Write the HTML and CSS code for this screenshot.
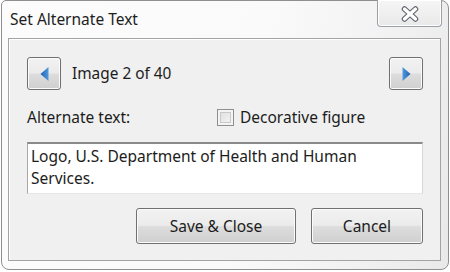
FILE: index.html
```html
<!DOCTYPE html>
<html lang="en">
<head>
<meta charset="utf-8">
<title>Set Alternate Text</title>
<link rel="stylesheet" href="styles.css">
</head>
<body>
<div class="window">
  <div class="titlebar">
    <span class="title">Set Alternate Text</span>
    <button class="close" aria-label="Close">
      <svg width="20" height="18" viewBox="0 0 20 18">
        <g stroke-linecap="round">
          <line x1="4.5" y1="4" x2="15.5" y2="14" stroke="#5f646e" stroke-width="5.5"/>
          <line x1="15.5" y1="4" x2="4.5" y2="14" stroke="#5f646e" stroke-width="5.5"/>
          <line x1="4.5" y1="4" x2="15.5" y2="14" stroke="#ffffff" stroke-width="3.3"/>
          <line x1="15.5" y1="4" x2="4.5" y2="14" stroke="#ffffff" stroke-width="3.3"/>
        </g>
      </svg>
    </button>
  </div>
  <div class="panel">
    <div class="nav-row">
      <button class="btn nav-btn" aria-label="Previous">
        <svg width="9" height="14" viewBox="0 0 9 14">
          <defs>
            <linearGradient id="gl" x1="0" y1="0" x2="1" y2="0">
              <stop offset="0" stop-color="#1d5fae"/>
              <stop offset="1" stop-color="#4f9ae0"/>
            </linearGradient>
          </defs>
          <polygon points="8.5,0 0.5,7 8.5,14" fill="url(#gl)"/>
        </svg>
      </button>
      <span class="counter">Image 2 of 40</span>
      <button class="btn nav-btn" aria-label="Next">
        <svg width="9" height="14" viewBox="0 0 9 14">
          <defs>
            <linearGradient id="gr" x1="0" y1="0" x2="1" y2="0">
              <stop offset="0" stop-color="#4f9ae0"/>
              <stop offset="1" stop-color="#1d5fae"/>
            </linearGradient>
          </defs>
          <polygon points="0.5,0 8.5,7 0.5,14" fill="url(#gr)"/>
        </svg>
      </button>
    </div>
    <div class="label-row">
      <span class="label">Alternate text:</span>
      <label class="check"><span class="box"></span>Decorative figure</label>
    </div>
    <div class="textbox">Logo, U.S. Department of Health and Human Services.</div>
    <div class="actions">
      <button class="btn action save">Save &amp; Close</button>
      <button class="btn action cancel">Cancel</button>
    </div>
  </div>
</div>
</body>
</html>
```
FILE: styles.css
```css
* { box-sizing: border-box; }
html, body { margin: 0; padding: 0; background: #ffffff; }
body {
  font-family: "Noto Sans", "Open Sans", sans-serif;
  color: #1c1c1c;
  width: 450px;
  height: 272px;
  overflow: hidden;
}
.window {
  margin-left: 1px;
  width: 448px;
  height: 270px;
  border: 1px solid #8f8f8f;
  border-radius: 5px 8px 8px 8px;
  background: linear-gradient(100deg, #fcfcfc 0%, #fafafa 55%, #f2f2f2 80%, #e9e9e9 100%);
  display: flex;
  flex-direction: column;
}
.titlebar {
  height: 37px;
  display: flex;
  align-items: flex-start;
  justify-content: space-between;
}
.title {
  font-size: 15.5px;
  padding: 8px 0 0 8px;
  line-height: 20px;
  color: #1e1e1e;
}
.close {
  margin: -1px 6px 0 0;
  width: 65px;
  height: 27px;
  border: 1px solid #9aa0a8;
  border-top: none;
  border-radius: 0 0 4px 4px;
  background: linear-gradient(#f6f6f6, #e9e9e9);
  box-shadow: inset 0 0 0 1px #ffffff;
  display: flex;
  align-items: center;
  justify-content: center;
  padding: 0;
}
.close svg { display: block; margin-top: 1px; }
.panel {
  margin: 0 7px 8px 6px;
  flex: 1;
  background: #f0f0f0;
  border: 1px solid #a3a3a3;
  box-shadow: inset 1px 1px 0 #ffffff;
  padding: 18px 17px 0 18px;
  display: flex;
  flex-direction: column;
}
.btn {
  font-family: inherit;
  color: #1c1c1c;
  border: 1px solid #707070;
  border-radius: 3px;
  background: linear-gradient(#f2f2f2 0%, #ebebeb 48%, #dddddd 52%, #cfcfcf 100%);
  box-shadow: inset 0 0 0 1px #fbfbfb;
  padding: 0;
  display: flex;
  align-items: center;
  justify-content: center;
}
.nav-row {
  display: flex;
  align-items: center;
  height: 33px;
}
.nav-btn {
  width: 34px;
  height: 33px;
}
.counter {
  flex: 1;
  margin-left: 11px;
  font-size: 15.4px;
}
.label-row {
  display: flex;
  align-items: center;
  margin-top: 18px;
  height: 18px;
  font-size: 15.5px;
}
.label { width: 190px; }
.check {
  display: flex;
  align-items: center;
}
.box {
  width: 17px;
  height: 17px;
  border: 1px solid #8e8f8f;
  background: linear-gradient(135deg, #dcdcdc, #f7f7f7);
  box-shadow: inset 0 0 0 2px #f4f4f4, inset 0 0 0 3px #c9c9c9;
  margin-right: 6px;
}
.textbox {
  margin-top: 16px;
  width: 396px;
  height: 52px;
  background: #ffffff;
  border: 1px solid #dadada;
  border-top: 2px solid #8a8a8a;
  border-left-color: #a8a8a8;
  border-right-color: #d8d8d8;
  border-bottom-color: #e6e6e6;
  padding: 1px 3px;
  font-size: 15.5px;
  line-height: 22px;
}
.actions {
  display: flex;
  justify-content: flex-end;
  gap: 15px;
  margin-top: 14px;
}
.action {
  height: 36px;
  font-size: 15.5px;
}
.save { width: 160px; }
.cancel { width: 112px; }
```
